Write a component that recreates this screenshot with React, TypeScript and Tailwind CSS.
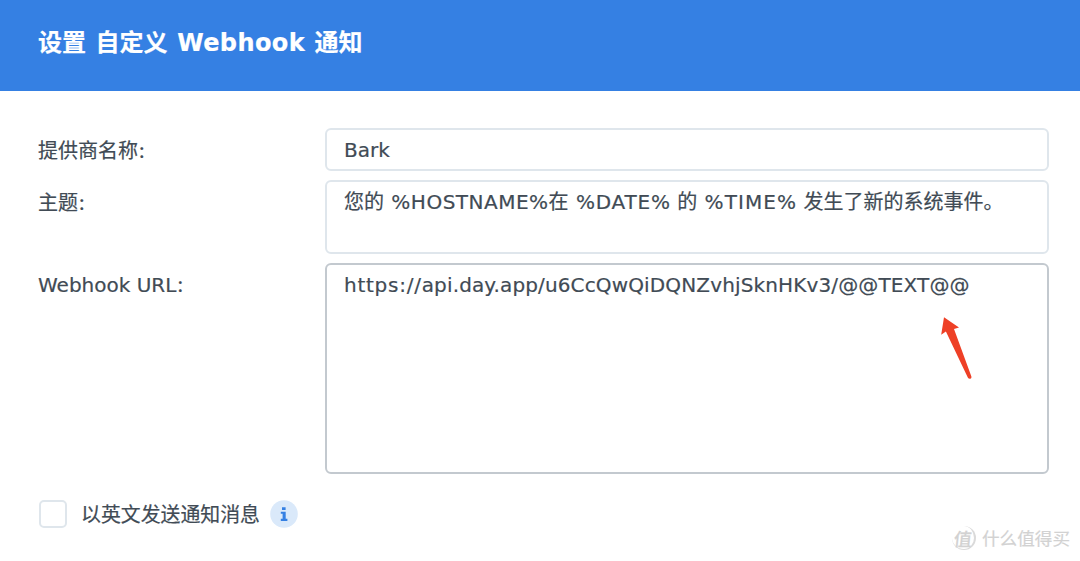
import { ReactNode } from "react";
import clsx from "clsx";

type FieldProps = { label: string; labelClass?: string; className?: string; children: ReactNode };

const Field = ({ label, labelClass, className, children }: FieldProps) => {
  return (
    <div className="flex">
      <div className={clsx("w-[287px] shrink-0 leading-[28px]", labelClass)}>
        {label}
        <span className="font-['Noto_Sans_CJK_SC'] pl-[1px]">:</span>
      </div>
      <div
        className={clsx(
          "relative w-[724px] shrink-0 rounded-[6px] border-2 px-[17px] leading-[28px] whitespace-nowrap",
          className
        )}
      >
        {children}
      </div>
    </div>
  );
};

const Arrow = () => {
  return (
    <svg
      className="absolute left-[614px] top-[51px]"
      width="34"
      height="66"
      viewBox="0 0 34 66"
      fill="none"
    >
      <path
        d="M3 1.3L18 11.6L13 13L30.4 60.4Q30.8 62.4 29.4 62.7Q27.6 63 26.8 61.4L4.9 15.4L0.2 18.8Z"
        fill="#EE4026"
      />
    </svg>
  );
};

const InfoIcon = () => {
  return (
    <svg width="28" height="28" viewBox="0 0 28 28" fill="none">
      <circle cx="14" cy="14" r="13.8" fill="#DAE9FA" />
      <path
        d="M12 7.3H15.6V9.9H12ZM10.8 11.8H15.7V18.8H17.4V20.9H10.8V18.8H12.6V13.8H10.8Z"
        fill="#3580E3"
      />
    </svg>
  );
};

const Watermark = () => {
  return (
    <div className="absolute left-[952px] top-[526px] flex items-center text-[#d2d2d2] font-['Noto_Sans_CJK_SC',sans-serif]">
      <div className="flex h-[24px] w-[24px] items-center justify-center rounded-full border-r-2 border-b border-[#dadada] text-[18px] leading-none font-medium">
        <span className="-skew-x-6">值</span>
      </div>
      <div className="ml-[6px] text-[17.6px] leading-[24px] whitespace-nowrap">什么值得买</div>
    </div>
  );
};

export default function App() {
  return (
    <div className="relative h-[561px] w-[1080px] overflow-hidden bg-white text-[20px] text-[#414b55] font-['DejaVu_Sans','Noto_Sans_CJK_SC',sans-serif] [-webkit-text-stroke:0.2px]">
      <header className="flex h-[91px] items-center bg-[#3580e3] pb-[6px] pl-[38px] text-[24px] font-bold whitespace-pre text-white [word-spacing:1.2px]">
        设置 自定义 <span className="tracking-[0.4px]">Webhook</span> 通知
      </header>
      <main className="px-[38px] pt-[37px]">
        <div className="flex flex-col">
          <Field
            label="提供商名称"
            labelClass="pt-[8px]"
            className="mb-[9px] h-[43px] border-[#dfe6ec] pt-[6px]"
          >
            Bark
          </Field>
          <Field
            label="主题"
            labelClass="pt-[8px]"
            className="mb-[9px] h-[74px] border-[#dfe6ec] pt-[6px]"
          >
            您的 <span className="ml-[1px] tracking-[0.5px]">%HOSTNAME%</span>在{" "}
            <span className="ml-[1px] tracking-[0.8px]">%DATE%</span> 的{" "}
            <span className="ml-[1px] tracking-[1.1px]">%TIME%</span> 发生了新的系统事件。
          </Field>
          <Field
            label="Webhook URL"
            labelClass="pt-[7px]"
            className="h-[211px] border-[#c3c9cf] pt-[6px]"
          >
            <span className="tracking-[0.75px]">https://</span>
            <span className="tracking-[0.14px]">api.day.app/u6CcQwQiDQNZvhjSknHKv3/@@TEXT@@</span>
            <Arrow />
          </Field>
        </div>
        <div className="mt-[26px] flex items-center">
          <div className="ml-[1px] h-[28px] w-[28px] rounded-[5px] border-2 border-[#dfe6ec]" />
          <span className="ml-[14px] pt-[4px] text-[19.9px] leading-[24px]">以英文发送通知消息</span>
          <span className="ml-[10px]">
            <InfoIcon />
          </span>
        </div>
      </main>
      <Watermark />
    </div>
  );
}
